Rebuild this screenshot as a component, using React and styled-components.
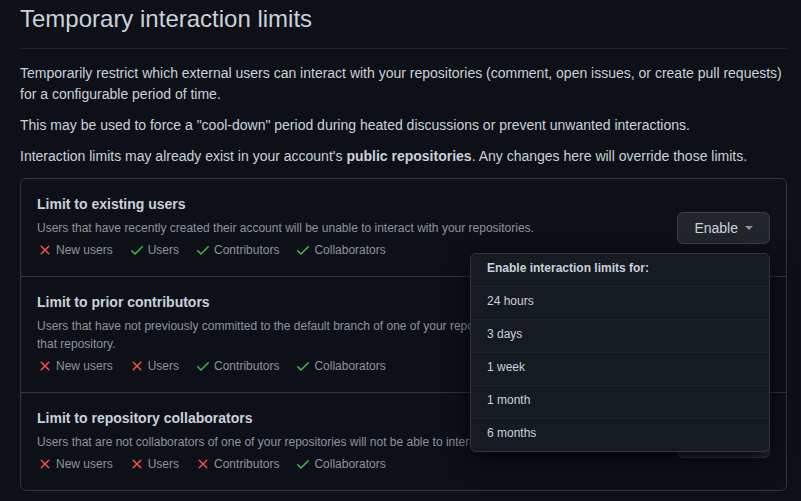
import React from "react";
import styled, { createGlobalStyle } from "styled-components";

const GlobalStyle = createGlobalStyle`
  html, body {
    margin: 0;
    padding: 0;
    background: #0d1117;
  }
  body {
    font-family: "Liberation Sans", Arial, sans-serif;
    color: #c9d1d9;
    font-size: 14px;
    line-height: 1.5;
  }
  * {
    box-sizing: border-box;
  }
`;

const Page = styled.div`
  padding: 1px 14px 0 20px;
  width: 801px;
  height: 501px;
  overflow: hidden;
`;

const Subhead = styled.div`
  padding-bottom: 11px;
  border-bottom: 1px solid #21262d;
  margin-bottom: 14px;
`;

const Heading = styled.h2`
  margin: 0;
  font-size: 24px;
  font-weight: 400;
  line-height: 36px;
  color: #c9d1d9;
`;

const Para = styled.p`
  margin: 0 0 10px;
  font-size: 14px;
  line-height: 21px;
`;

const Box = styled.div`
  margin-top: 11px;
  border: 1px solid #30363d;
  border-radius: 6px;
`;

const Row = styled.div`
  display: flex;
  align-items: center;
  padding: 16px;
  border-top: ${(p) => (p.first ? "none" : "1px solid #30363d")};
`;

const Info = styled.div`
  flex: 1;
  min-width: 0;
`;

const RowTitle = styled.div`
  font-size: 14px;
  font-weight: 700;
  line-height: 18px;
  color: #c9d1d9;
`;

const Desc = styled.div`
  margin-top: 6px;
  font-size: 12px;
  line-height: 18px;
  color: #8b949e;
`;

const Perms = styled.div`
  display: flex;
  margin-top: 3px;
  font-size: 12px;
  line-height: 20px;
  color: #8b949e;
`;

const Perm = styled.span`
  display: inline-flex;
  align-items: center;
  gap: 3px;
  margin-right: 16px;
  svg {
    fill: ${(p) => (p.ok ? "#3fb950" : "#f85149")};
  }
`;

const Action = styled.div`
  position: relative;
  flex-shrink: 0;
`;

const Button = styled.button`
  display: flex;
  align-items: center;
  padding: 5px 16px;
  font-family: inherit;
  font-size: 14px;
  line-height: 20px;
  color: #c9d1d9;
  background: #21262d;
  border: 1px solid #3a3f46;
  border-radius: 6px;
  cursor: pointer;
`;

const Caret = styled.span`
  margin-left: 7px;
  width: 0;
  height: 0;
  border-style: solid;
  border-width: 4px 4px 0;
  border-color: #8b949e transparent transparent;
`;

const Menu = styled.div`
  position: absolute;
  z-index: 10;
  top: calc(100% + 9px);
  right: 0;
  width: 300px;
  background: #161b22;
  border: 1px solid #30363d;
  border-radius: 6px;
  box-shadow: 0 8px 24px rgba(1, 4, 9, 0.85);
  overflow: hidden;
`;

const MenuItem = styled.div`
  padding: 6px 16px 10px;
  font-size: 12px;
  line-height: 16px;
  font-weight: ${(p) => (p.header ? 700 : 400)};
  color: #c9d1d9;
  border-bottom: 1px solid #21262d;
  &:last-child {
    border-bottom: none;
  }
`;

const XIcon = () => (
  <svg width="16" height="16" viewBox="0 0 16 16">
    <path d="M3.72 3.72a.75.75 0 0 1 1.06 0L8 6.94l3.22-3.22a.749.749 0 0 1 1.275.326.749.749 0 0 1-.215.734L9.06 8l3.22 3.22a.749.749 0 0 1-.326 1.275.749.749 0 0 1-.734-.215L8 9.06l-3.22 3.22a.751.751 0 0 1-1.042-.018.751.751 0 0 1-.018-1.042L6.94 8 3.72 4.780a.75.75 0 0 1 0-1.06Z" />
  </svg>
);

const CheckIcon = () => (
  <svg width="16" height="16" viewBox="0 0 16 16">
    <path d="M13.78 4.22a.75.75 0 0 1 0 1.06l-7.25 7.25a.75.75 0 0 1-1.06 0L2.22 9.28a.751.751 0 0 1 .018-1.042.751.751 0 0 1 1.042-.018L6 10.94l6.72-6.72a.75.75 0 0 1 1.06 0Z" />
  </svg>
);

const groups = ["New users", "Users", "Contributors", "Collaborators"];

const limits = [
  {
    title: "Limit to existing users",
    desc: "Users that have recently created their account will be unable to interact with your repositories.",
    allowed: 1,
  },
  {
    title: "Limit to prior contributors",
    desc: "Users that have not previously committed to the default branch of one of your repositories will not be able to interact with that repository.",
    allowed: 2,
  },
  {
    title: "Limit to repository collaborators",
    desc: "Users that are not collaborators of one of your repositories will not be able to interact with those repositories.",
    allowed: 3,
  },
];

const periods = ["24 hours", "3 days", "1 week", "1 month", "6 months"];

const App = () => {
  return (
    <Page>
      <GlobalStyle />
      <Subhead>
        <Heading>Temporary interaction limits</Heading>
      </Subhead>
      <Para>
        Temporarily restrict which external users can interact with your
        repositories (comment, open issues, or create pull requests) for a
        configurable period of time.
      </Para>
      <Para>
        This may be used to force a "cool-down" period during heated
        discussions or prevent unwanted interactions.
      </Para>
      <Para>
        Interaction limits may already exist in your account's{" "}
        <strong>public repositories</strong>. Any changes here will override
        those limits.
      </Para>
      <Box>
        {limits.map((l, i) => (
          <Row key={l.title} first={i === 0}>
            <Info>
              <RowTitle>{l.title}</RowTitle>
              <Desc>{l.desc}</Desc>
              <Perms>
                {groups.map((g, j) => (
                  <Perm key={g} ok={j >= l.allowed}>
                    {j >= l.allowed ? <CheckIcon /> : <XIcon />}
                    {g}
                  </Perm>
                ))}
              </Perms>
            </Info>
            <Action>
              <Button>
                Enable
                <Caret />
              </Button>
              {i === 0 && (
                <Menu>
                  <MenuItem header>Enable interaction limits for:</MenuItem>
                  {periods.map((p) => (
                    <MenuItem key={p}>{p}</MenuItem>
                  ))}
                </Menu>
              )}
            </Action>
          </Row>
        ))}
      </Box>
    </Page>
  );
};

export default App;
